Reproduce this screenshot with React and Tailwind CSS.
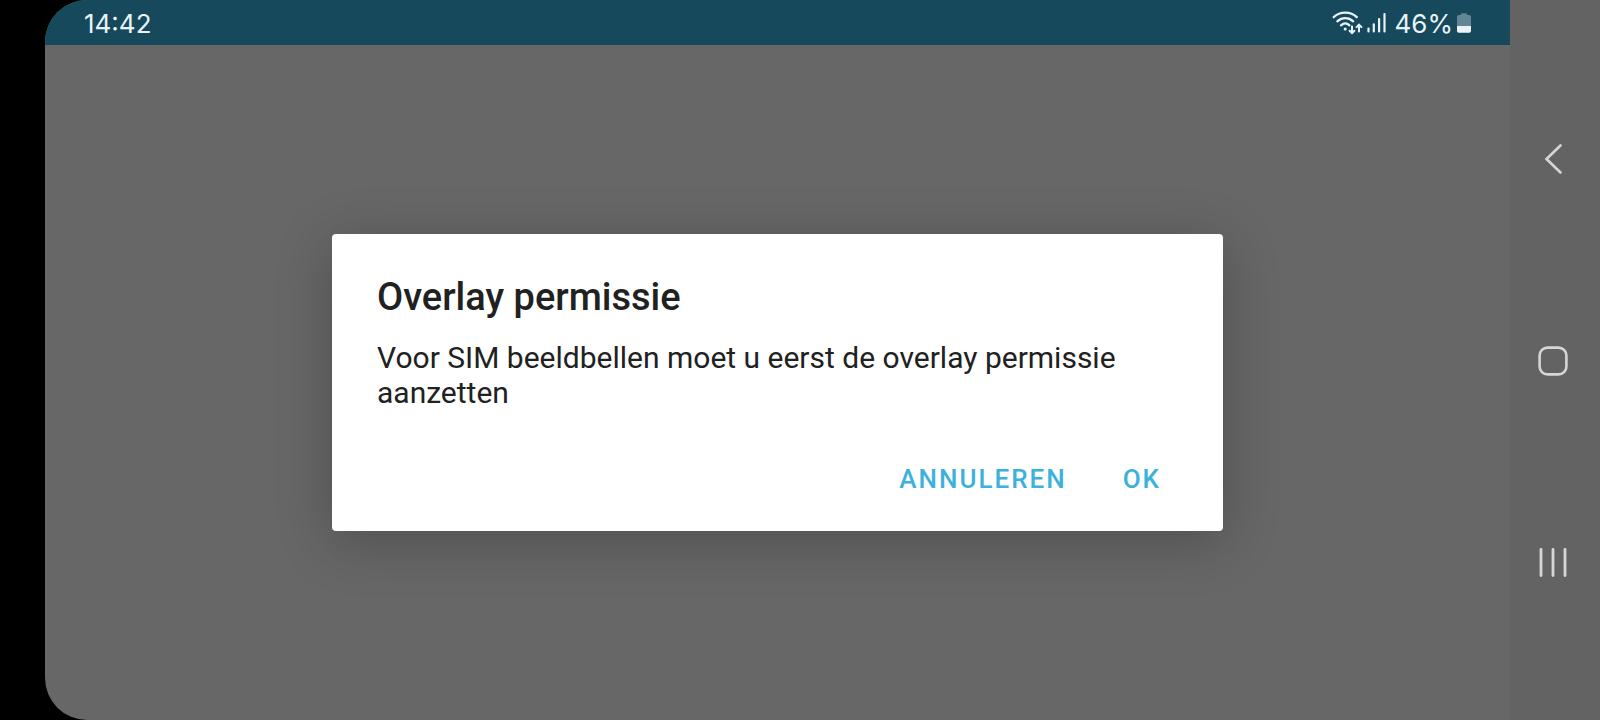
import clsx from "clsx";

// status bar icons
function WifiIcon() {
  return (
    <svg width="31" height="24" viewBox="0 0 31 24" fill="none" stroke="currentColor" strokeWidth="2.3" strokeLinecap="round" aria-hidden="true">
      <path d="M1.7 6.2C8 .2 18.5 .2 24.8 6.2" />
      <path d="M5.3 10.3C9.8 6.1 16.6 6.1 21.2 10.3" />
      <path d="M9 14.3C11.6 12 14.9 12 17.5 14.3" />
      <circle cx="13.2" cy="18" r="1.5" fill="currentColor" stroke="none" />
      <path d="M20 15.4V22M17.6 19.8L20 22.2L22.4 19.8" strokeWidth="2" />
      <path d="M27 20.4V14M24.5 16.1L27 13.7L29.5 16.1" strokeWidth="2" />
    </svg>
  );
}

function SignalIcon() {
  return (
    <svg width="20" height="22" viewBox="0 0 20 22" fill="currentColor" aria-hidden="true">
      <rect x="0.4" y="15.6" width="2.2" height="4.9" rx="1" />
      <rect x="5.7" y="11.2" width="2.2" height="9.3" rx="1" />
      <rect x="11" y="6" width="2.2" height="14.5" rx="1" />
      <rect x="16.4" y="1" width="2.2" height="19.5" rx="1" />
    </svg>
  );
}

function BatteryIcon() {
  return (
    <svg width="14" height="20" viewBox="0 0 14 20" fill="currentColor" aria-hidden="true">
      <path d="M4 1.2Q4 .3 5 .3H9Q10 .3 10 1.2V2H12Q14 2 14 4V13H0V4Q0 2 2 2H4Z" opacity="0.36" />
      <path d="M0 13H14V18Q14 19.7 12.3 19.7H1.7Q0 19.7 0 18Z" />
    </svg>
  );
}

function StatusBar() {
  return (
    <header className="flex h-[45px] items-center justify-between bg-[#16495c] px-[39px] font-[Inter,sans-serif] text-[26px] leading-none text-[#e9f3f8]">
      <time className="pt-0.5">14:42</time>
      <div className="flex items-center">
        <WifiIcon />
        <div className="ml-1">
          <SignalIcon />
        </div>
        <span className="mr-1 ml-2 pt-0.5">46%</span>
        <BatteryIcon />
      </div>
    </header>
  );
}

function DialogButton({ children, className }) {
  return (
    <button
      type="button"
      className={clsx("px-4 py-3 text-[26px] leading-8 font-medium tracking-[2px] text-[#3cb1dc] uppercase", className)}
    >
      {children}
    </button>
  );
}

function PermissionDialog() {
  return (
    <section
      role="dialog"
      aria-labelledby="dialog-title"
      aria-describedby="dialog-text"
      className="w-full max-w-[891px] rounded-[4px] bg-white pt-[41px] pr-[46px] pb-6 pl-[45px] text-[#212121] shadow-[0_10px_56px_rgba(0,0,0,0.24)]"
    >
      <h1 id="dialog-title" className="text-[38px] leading-[45px] font-medium">
        Overlay permissie
      </h1>
      <p id="dialog-text" className="mt-5 text-[30px] leading-[35px]">
        Voor SIM beeldbellen moet u eerst de overlay permissie aanzetten
      </p>
      <div className="mt-[41px] flex justify-end gap-6">
        <DialogButton>Annuleren</DialogButton>
        <DialogButton>Ok</DialogButton>
      </div>
    </section>
  );
}

// back / home / recents
function NavBar() {
  return (
    <nav className="flex w-[90px] shrink-0 flex-col bg-[#636363] pt-[58px] pb-[57px] pr-1 text-[#d6d6d6]">
      <button type="button" aria-label="Terug" className="flex flex-1 items-center justify-center">
        <svg width="32" height="32" viewBox="0 0 32 32" fill="none" stroke="currentColor" strokeWidth="2.6" strokeLinecap="round">
          <path d="M23.5 2.5L9.5 16L23.5 29.5" />
        </svg>
      </button>
      <button type="button" aria-label="Startscherm" className="flex flex-1 items-center justify-center">
        <svg width="32" height="32" viewBox="0 0 32 32" fill="none" stroke="currentColor" strokeWidth="2.6">
          <rect x="2.6" y="2.6" width="26.8" height="26.8" rx="8" />
        </svg>
      </button>
      <button type="button" aria-label="Recente apps" className="flex flex-1 items-center justify-center">
        <svg width="32" height="32" viewBox="0 0 32 32" fill="none" stroke="currentColor" strokeWidth="2.8" strokeLinecap="round">
          <path d="M4 3.4V29.6M16 3.4V29.6M28 3.4V29.6" />
        </svg>
      </button>
    </nav>
  );
}

function App() {
  return (
    <div className="flex min-h-screen bg-black pl-[45px] font-[Roboto,sans-serif]">
      <div className="flex flex-1 flex-col overflow-hidden rounded-l-[42px] bg-[#676767]">
        <StatusBar />
        <main className="flex flex-1 items-center justify-center">
          <PermissionDialog />
        </main>
      </div>
      <NavBar />
    </div>
  );
}

export default App;
